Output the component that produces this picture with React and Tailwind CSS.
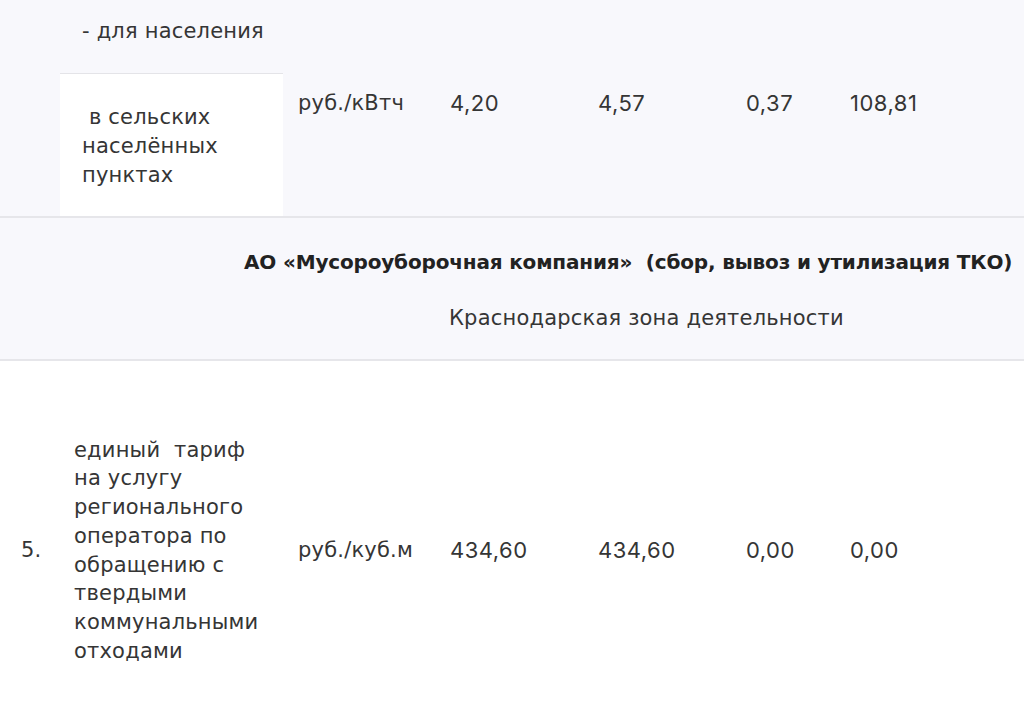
const textFont = "font-['DejaVu_Sans',sans-serif] text-[21px] tracking-[0.2px]";
const numFont = "font-['Inter',sans-serif] text-[22px] tracking-[0.5px]";

export default function App() {
  return (
    <div className="w-[1024px] h-[728px] overflow-hidden bg-[#f8f8fc] text-[#353535]">
      <table className="w-[1024px] table-fixed border-collapse">
        <colgroup>
          <col className="w-[60px]" />
          <col className="w-[223px]" />
          <col className="w-[152px]" />
          <col className="w-[148px]" />
          <col className="w-[147px]" />
          <col className="w-[105px]" />
          <col className="w-[189px]" />
        </colgroup>
        <tbody>
          {/* подзаголовок группы */}
          <tr className="h-[73px]">
            <td />
            <td className={`${textFont} align-top pt-[16px] pl-[22px] whitespace-nowrap`}>
              - для населения
            </td>
            <td colSpan={5} />
          </tr>

          <tr className="h-[144px] border-b-2 border-[#e6e6ea]">
            <td />
            <td className={`${textFont} leading-[29px] bg-white border-t border-[#e4e4e8] align-middle pl-[22px] pt-[3px]`}>
              &nbsp;в сельских
              <br />
              населённых
              <br />
              пунктах
            </td>
            <td className={`${textFont} align-top pt-[15px] pl-[15px] whitespace-nowrap`}>руб./кВтч</td>
            <td className={`${numFont} align-top pt-[14px] pl-[15px]`}>4,20</td>
            <td className={`${numFont} align-top pt-[14px] pl-[15px]`}>4,57</td>
            <td className={`${numFont} align-top pt-[14px] pl-[16px]`}>0,37</td>
            <td className={`${numFont} align-top pt-[14px] pl-[15px]`}>108,81</td>
          </tr>

          {/* организация */}
          <tr className="h-[143px] border-b-2 border-[#e6e6ea]">
            <td colSpan={7} className="align-top">
              <div className="flex flex-col pt-[29px]">
                <div className="font-['DejaVu_Sans',sans-serif] text-[20px] tracking-[-0.17px] font-bold text-[#222] pl-[244px] whitespace-nowrap">
                  АО «Мусороуборочная компания»&nbsp; (сбор, вывоз и утилизация ТКО)
                </div>
                <div className={`${textFont} pl-[449px] mt-[26px] whitespace-nowrap`}>
                  Краснодарская зона деятельности
                </div>
              </div>
            </td>
          </tr>

          <tr className="h-[380px] bg-white">
            <td className={`${textFont} align-middle pl-[21px]`}>5.</td>
            <td className={`${textFont} leading-[28.7px] align-middle pl-[14px] whitespace-nowrap`}>
              единый&nbsp; тариф
              <br />
              на услугу
              <br />
              регионального
              <br />
              оператора по
              <br />
              обращению с
              <br />
              твердыми
              <br />
              коммунальными
              <br />
              отходами
            </td>
            <td className={`${textFont} align-middle pl-[15px] whitespace-nowrap`}>руб./куб.м</td>
            <td className={`${numFont} align-middle pl-[15px]`}>434,60</td>
            <td className={`${numFont} align-middle pl-[15px]`}>434,60</td>
            <td className={`${numFont} align-middle pl-[16px]`}>0,00</td>
            <td className={`${numFont} align-middle pl-[15px]`}>0,00</td>
          </tr>
        </tbody>
      </table>
    </div>
  );
}
